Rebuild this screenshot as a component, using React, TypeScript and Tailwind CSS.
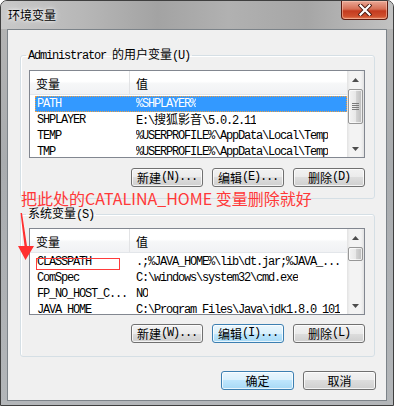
import type { ReactNode } from 'react';
import clsx from 'clsx';

const CJK_RE = /([\u2e80-\u9fff\uff00-\uffef]+)/;
const MONO =
  "font-['Liberation_Mono','Noto_Sans_CJK_SC',monospace] text-[12px] tracking-[-1.2px] whitespace-pre";

// SimSun-like mix: latin half width (6px), CJK full width (12px)
function Mix({ text }: { text: string }) {
  return (
    <>
      {text.split(CJK_RE).map((part, i) =>
        i % 2 === 1 ? (
          <span key={i} className="font-['Noto_Sans_CJK_SC',sans-serif] text-[12px] tracking-normal">
            {part}
          </span>
        ) : part ? (
          <span key={i}>{part}</span>
        ) : null
      )}
    </>
  );
}

function Btn({ label, blue, wide }: { label: string; blue?: boolean; wide?: boolean }) {
  return (
    <div
      className={clsx(
        'flex h-[19px] items-center justify-center rounded-[3px] border leading-[17px] text-black shadow-[inset_0_0_0_1px_rgba(255,255,255,0.75)]',
        MONO,
        wide ? 'w-[73px]' : 'w-[72px]',
        blue
          ? 'border-[#3c7fb1] bg-[linear-gradient(180deg,#eaf6fd_0%,#d9f0fc_50%,#bee6fd_50%,#a7d9f5_100%)]'
          : 'border-[#707070] bg-[linear-gradient(180deg,#f2f2f2_0%,#ebebeb_50%,#dddddd_50%,#cfcfcf_100%)]'
      )}
    >
      <Mix text={label} />
    </div>
  );
}

function Arrow({ up }: { up?: boolean }) {
  return (
    <div className="flex h-[17px] items-center justify-center">
      <svg width="7" height="4" viewBox="0 0 7 4">
        <path d={up ? 'M0 4 L3.5 0 L7 4 Z' : 'M0 0 L7 0 L3.5 4 Z'} fill="#4d4d4d" />
      </svg>
    </div>
  );
}

function ScrollBar({ thumbTop, thumbH, grip }: { thumbTop: number; thumbH: number; grip?: boolean }) {
  return (
    <div className="flex w-[17px] flex-col bg-[linear-gradient(90deg,#e2e2e2,#f3f3f3_18%,#f3f3f3_82%,#e2e2e2)]">
      <Arrow up />
      <div className="flex flex-1 flex-col">
        <div
          className="mx-[1px] flex items-center justify-center rounded-[2px] border border-[#979797] bg-[linear-gradient(90deg,#f3f3f3_0%,#e8e8e8_50%,#d6d6d6_50%,#bcbcbc_100%)] shadow-[inset_0_0_0_1px_rgba(255,255,255,0.7)]"
          style={{ marginTop: thumbTop, height: thumbH }}
        >
          {grip && (
            <svg width="7" height="7" viewBox="0 0 7 7">
              <path d="M0 0.5 H7 M0 2.5 H7 M0 4.5 H7 M0 6.5 H7" stroke="#7a7a7a" strokeWidth="1" />
            </svg>
          )}
        </div>
      </div>
      <Arrow />
    </div>
  );
}

type Row = [string, string];

function VarList({
  rows,
  height,
  selected,
  thumbTop,
  thumbH,
  grip,
}: {
  rows: Row[];
  height: number;
  selected?: number;
  thumbTop: number;
  thumbH: number;
  grip?: boolean;
}) {
  return (
    <div className="flex w-[336px] overflow-hidden border border-[#828790] bg-white" style={{ height }}>
      <div className="flex flex-1 flex-col overflow-hidden">
        {/* Header */}
        <div className="flex h-[24px] shrink-0 border-b border-[#e3e6ea] bg-[linear-gradient(180deg,#ffffff_0%,#ffffff_45%,#f6f7f8_55%,#f1f2f4_100%)] font-['Noto_Sans_CJK_SC',sans-serif] text-[12px] leading-[16px] text-black">
          <div className="w-[100px] border-r border-[#e2e3e5] pl-[6px] pt-[5px]">变量</div>
          <div className="pl-[6px] pt-[5px]">值</div>
        </div>
        <div className="pt-[1px]">
          {rows.map(([name, value], i) => (
            <div
              key={name}
              className={clsx(
                'ml-[5px] flex h-[16px] items-center leading-[16px]',
                MONO,
                i === selected
                  ? 'bg-[#3399ff] text-white outline-1 -outline-offset-1 outline-dotted outline-[#f0a040]'
                  : 'text-black'
              )}
            >
              <span className="w-[101px] shrink-0 overflow-hidden pl-[2px]">
                <Mix text={name} />
              </span>
              <span className="overflow-hidden">
                <Mix text={value} />
              </span>
            </div>
          ))}
        </div>
      </div>
      <ScrollBar thumbTop={thumbTop} thumbH={thumbH} grip={grip} />
    </div>
  );
}

function Group({
  label,
  children,
  className,
}: {
  label: string;
  children: ReactNode;
  className?: string;
}) {
  return (
    <fieldset
      className={clsx(
        'ml-[12px] w-[355px] rounded-[3px] border border-[#d5dfe5] pl-[8px] pr-[9px] shadow-[inset_1px_1px_0_#fff]',
        className
      )}
    >
      <legend className={clsx('-ml-[3px] px-[2px] leading-[14px] text-black', MONO)}>
        <Mix text={label} />
      </legend>
      {children}
    </fieldset>
  );
}

export default function App(): ReactNode {
  return (
    <div className="relative h-[406px] w-[394px] overflow-hidden rounded-t-[7px] border border-[#3f3f3f] bg-[linear-gradient(180deg,#c6c6c6_0%,#b3b3b3_7%,#a9acaf_40%,#b3b6b9_100%)] font-['Noto_Sans_CJK_SC',sans-serif]">
      {/* Title bar */}
      <div className="flex h-[28px] items-start bg-[linear-gradient(90deg,#c9c9c9_0%,#b6b6b6_22%,#a3a3a3_40%,#b1b1b1_58%,#a6a6a6_78%,#c2c2c2_100%)]">
        <span className="ml-[7px] mt-[6px] text-[12px] leading-[16px] text-black [text-shadow:0_0_6px_#ffffff,0_0_3px_#ffffff]">
          环境变量
        </span>
        <div className="ml-auto mr-[5px] flex h-[19px] w-[47px] items-center justify-center rounded-b-[4px] border border-t-0 border-[#5e1b10] bg-[linear-gradient(180deg,#eaa896_0%,#d66f55_45%,#c43b1f_55%,#cf4f2d_85%,#e4845f_100%)] shadow-[inset_0_0_0_1px_rgba(255,210,190,0.5)]">
          <svg width="14" height="12" viewBox="0 0 14 12">
            <path d="M2.5 1.5 L11.5 10.5 M11.5 1.5 L2.5 10.5" stroke="#4a1a10" strokeWidth="4" strokeLinecap="square" />
            <path d="M2.5 1.5 L11.5 10.5 M11.5 1.5 L2.5 10.5" stroke="#ffffff" strokeWidth="2.2" strokeLinecap="square" />
          </svg>
        </div>
      </div>

      {/* Client area */}
      <div className="ml-[6px] flex h-[372px] w-[380px] flex-col border border-[#7c8389] bg-[#f0f0f0]">
        <Group label="Administrator 的用户变量(U)" className="mt-[17px] pb-[11px] pt-[7px]">
          <VarList
            height={88}
            selected={0}
            thumbTop={1}
            thumbH={35}
            grip
            rows={[
              ['PATH', '%SHPLAYER%'],
              ['SHPLAYER', 'E:\\搜狐影音\\5.0.2.11'],
              ['TEMP', '%USERPROFILE%\\AppData\\Local\\Temp'],
              ['TMP', '%USERPROFILE%\\AppData\\Local\\Temp'],
            ]}
          />
          <div className="mt-[10px] flex justify-end gap-[9px]">
            <Btn label="新建(N)..." />
            <Btn label="编辑(E)..." />
            <Btn label="删除(D)" />
          </div>
        </Group>

        <Group label="系统变量(S)" className="mt-[7px] pb-[13px] pt-[6px]">
          <VarList
            height={87}
            thumbTop={1}
            thumbH={14}
            rows={[
              ['CLASSPATH', '.;%JAVA_HOME%\\lib\\dt.jar;%JAVA_...'],
              ['ComSpec', 'C:\\windows\\system32\\cmd.exe'],
              ['FP_NO_HOST_C...', 'NO'],
              ['JAVA_HOME', 'C:\\Program Files\\Java\\jdk1.8.0_101'],
            ]}
          />
          <div className="mt-[9px] flex justify-end gap-[9px]">
            <Btn label="新建(W)..." />
            <Btn label="编辑(I)..." blue />
            <Btn label="删除(L)" />
          </div>
        </Group>

        <div className="mt-[14px] flex justify-end gap-[9px] pr-[10px]">
          <Btn label="确定" blue wide />
          <Btn label="取消" wide />
        </div>
      </div>

      {/* Red annotation overlay */}
      <div className="absolute left-[20px] top-[186px] whitespace-pre text-[16px] leading-[22px] text-[#ff3838]">
        把此处的CATALINA_HOME 变量删除就好
      </div>
      <div className="absolute left-[35px] top-[257px] h-[12px] w-[84px] border border-[#ff3b3b]" />
      <svg className="pointer-events-none absolute left-0 top-0" width="394" height="406" viewBox="0 0 394 406">
        <polygon points="19.5,212 21,212 26,245 33,245 24.5,259 17,245 23.5,245" fill="#ff3030" />
      </svg>
    </div>
  );
}
